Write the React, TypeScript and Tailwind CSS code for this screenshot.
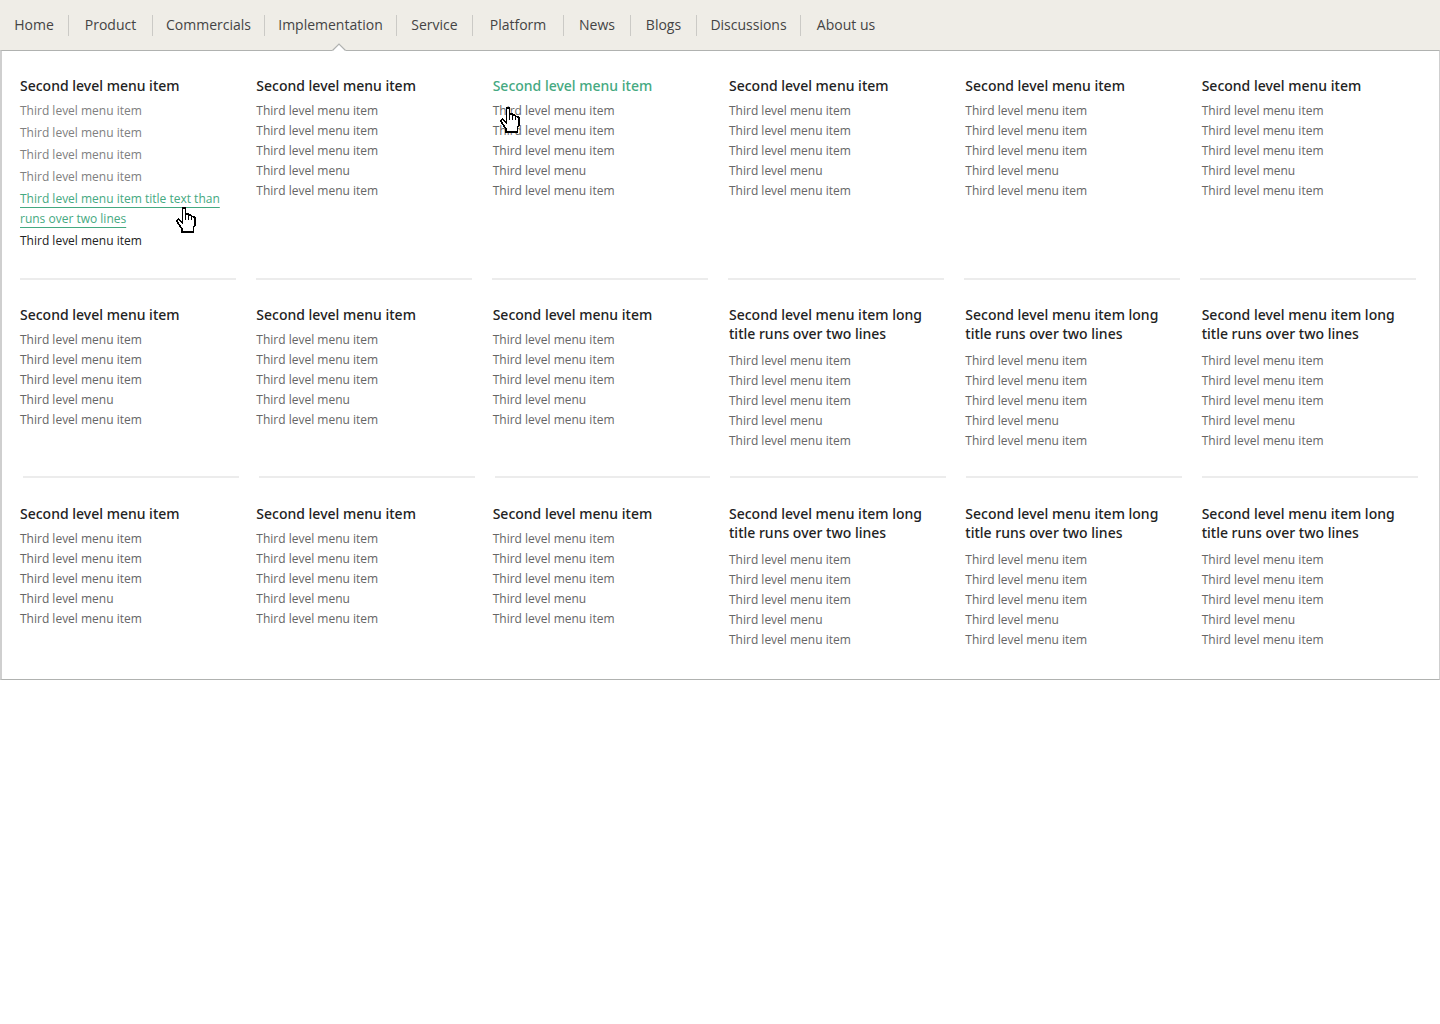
const THIRD = [
  'Third level menu item',
  'Third level menu item',
  'Third level menu item',
  'Third level menu',
  'Third level menu item',
];
const TITLE = 'Second level menu item';
const LONG_TITLE = 'Second level menu item long title runs over two lines';

const navItems = [
  { label: 'Home', width: 'w-[69px]' },
  { label: 'Product', width: 'w-[84px]' },
  { label: 'Commercials', width: 'w-[112px]' },
  { label: 'Implementation', width: 'w-[132px]', open: true },
  { label: 'Service', width: 'w-[76px]' },
  { label: 'Platform', width: 'w-[91px]' },
  { label: 'News', width: 'w-[67px]' },
  { label: 'Blogs', width: 'w-[66px]' },
  { label: 'Discussions', width: 'w-[104px]' },
  { label: 'About us', width: 'w-[90px]' },
];

const lowerRow = [TITLE, TITLE, TITLE, LONG_TITLE, LONG_TITLE, LONG_TITLE];

function HandCursor({ className }: { className: string }) {
  return (
    <svg
      className={`pointer-events-none absolute ${className}`}
      width="20"
      height="26"
      viewBox="0 0 20 26"
      aria-hidden="true"
    >
      <path
        d="M6.5 15V2Q6.5.8 8 .8T9.5 2V7Q12.5 6 12.8 8.3Q15.5 7.6 16 9.5Q19 9.5 19 12V18L17.3 21V25.2H6V22L4 19L1 14.5Q1 12 3 12.3L6.5 16Z"
        fill="#fff"
        stroke="#000"
        strokeWidth="1.6"
        shapeRendering="crispEdges"
      />
      <path
        d="M9.5 6V12.5M12.5 8V12.5M15.5 9.5V13"
        fill="none"
        stroke="#000"
        strokeWidth="1"
        shapeRendering="crispEdges"
      />
    </svg>
  );
}

function NavBar() {
  return (
    <nav className="h-[50px] bg-[#efede7] pt-[15px]">
      <ul className="flex">
        {navItems.map((item, i) => (
          <li
            key={item.label}
            className={`relative flex h-[21px] items-start justify-center ${item.width} ${
              i < navItems.length - 1 ? 'border-r border-[#cbcac6]' : ''
            }`}
          >
            <a href="#" className="text-sm leading-[19px] whitespace-nowrap text-[#444]">
              {item.label}
            </a>
            {item.open && (
              <svg
                className="absolute top-[28px] left-[67px]"
                width="14"
                height="8"
                viewBox="0 0 14 8"
                aria-hidden="true"
              >
                <path d="M0 8L7 1L14 8Z" fill="#fff" />
                <path d="M.5 7.5L7 1L13.5 7.5" fill="none" stroke="#b0b2b0" strokeWidth="1.2" />
              </svg>
            )}
          </li>
        ))}
      </ul>
    </nav>
  );
}

function ColumnTitle({ title, hovered = false }: { title: string; hovered?: boolean }) {
  return (
    <h2
      className={`pr-5 font-['Noto_Sans',sans-serif] text-sm leading-[19px] font-medium ${
        hovered ? 'text-[#45a981]' : 'text-[#222]'
      } ${title === LONG_TITLE ? 'pb-2' : 'pb-[6px]'}`}
    >
      <a href="#">{title}</a>
    </h2>
  );
}

function MenuColumn({ title, hovered = false }: { title: string; hovered?: boolean }) {
  return (
    <section className="relative">
      <ColumnTitle title={title} hovered={hovered} />
      <ul>
        {THIRD.map((label, i) => (
          <li key={i} className="text-xs leading-5 text-[#666]">
            <a href="#">{label}</a>
          </li>
        ))}
      </ul>
      {hovered && <HandCursor className="top-[31px] left-[7px]" />}
    </section>
  );
}

function StatesColumn() {
  return (
    <section className="relative">
      <ColumnTitle title={TITLE} />
      <ul className="flex flex-col gap-[2px] text-xs leading-5 text-[#808080]">
        {[0, 1, 2, 3].map((i) => (
          <li key={i}>
            <a href="#">Third level menu item</a>
          </li>
        ))}
        <li>
          <a
            href="#"
            className="text-[#45a981] underline decoration-1 underline-offset-4 [text-decoration-skip-ink:none]"
          >
            Third level menu item title text than runs over two lines
          </a>
        </li>
        <li>
          <a href="#" className="text-[#222]">
            Third level menu item
          </a>
        </li>
      </ul>
      <HandCursor className="top-[131px] left-[156px]" />
    </section>
  );
}

function Dividers({ className }: { className: string }) {
  return (
    <div className={`grid grid-cols-6 gap-5 ${className}`}>
      {lowerRow.map((_, i) => (
        <div key={i} className="h-[2px] bg-[#ececec]" />
      ))}
    </div>
  );
}

export default function App() {
  return (
    <div className="min-h-screen bg-white font-['Open_Sans','Noto_Sans',sans-serif]">
      <NavBar />
      <main className="border border-l-2 border-[#b0b2b0] border-r-[#cfcfcf] border-l-[#cfcfcf]">
        <div className="grid grid-cols-6 gap-5 pt-[25px] pr-[21px] pb-[27px] pl-[18px]">
          <StatesColumn />
          <MenuColumn title={TITLE} />
          <MenuColumn title={TITLE} hovered />
          <MenuColumn title={TITLE} />
          <MenuColumn title={TITLE} />
          <MenuColumn title={TITLE} />
        </div>
        <Dividers className="pr-[23px] pl-[18px]" />
        <div className="grid grid-cols-6 gap-5 pt-[25px] pr-[21px] pb-[25px] pl-[18px]">
          {lowerRow.map((title, i) => (
            <MenuColumn key={i} title={title} />
          ))}
        </div>
        <Dividers className="pr-[21px] pl-[21px]" />
        <div className="grid grid-cols-6 gap-5 pt-[26px] pr-[21px] pb-[29px] pl-[18px]">
          {lowerRow.map((title, i) => (
            <MenuColumn key={i} title={title} />
          ))}
        </div>
      </main>
    </div>
  );
}
